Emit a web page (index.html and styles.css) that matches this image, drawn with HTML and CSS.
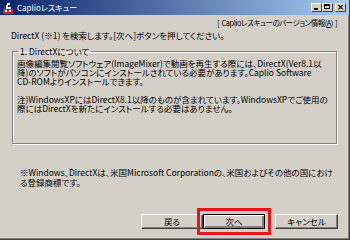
FILE: index.html
```html
<!DOCTYPE html>
<html lang="ja">
<head>
    <meta charset="UTF-8">
    <title>Caplioレスキュー</title>
    <link rel="stylesheet" href="styles.css">
</head>
<body>

<div class="window">
    <div class="titlebar">
        <svg class="app-icon" width="12" height="12" viewBox="0 0 12 12">
            <rect x="1" y="7" width="10" height="5" fill="#d0202a"/>
            <rect x="3" y="8" width="2" height="2" fill="#ffffff"/>
            <rect x="7" y="8" width="2" height="2" fill="#ffffff"/>
            <path d="M5 1h3v2H6v2h3v2H4V3h1z" fill="#ffffff"/>
            <path d="M6 0h2v1H6zM2 4h2v3H2z" fill="#1c3fb8"/>
        </svg>
        <span class="title">Caplioレスキュー</span>
        <div class="caption-buttons">
            <span class="cap-btn"><i class="min"></i></span>
            <span class="cap-btn"><i class="max"></i></span>
            <span class="cap-btn close">&#215;</span>
        </div>
    </div>

    <div class="content">
        <div class="about">[&nbsp;Caplioレスキューのバージョン情報(<u>A</u>)&nbsp;]</div>
        <p class="intro">DirectX (※1) を検索します。[次へ]ボタンを押してください。</p>

        <fieldset class="group">
            <legend>1. DirectXについて</legend>
            <p>画像編集閲覧ソフトウェア(ImageMixer)で動画を再生する際には、DirectX(Ver8.1以<br>降)のソフトがパソコンにインストールされている必要があります。Caplio Software<br>CD-ROMよりインストールできます。</p>
            <p>注)WindowsXPにはDirectX8.1以降のものが含まれています。WindowsXPでご使用の<br>際にはDirectXを新たにインストールする必要はありません。</p>
        </fieldset>

        <p class="note">※Windows、DirectXは、米国Microsoft Corporationの、米国およびその他の国におけ<br>る登録商標です。</p>

        <div class="buttons">
            <button class="btn">戻る</button>
            <button class="btn default">次へ</button>
            <button class="btn cancel">キャンセル</button>
        </div>
    </div>
</div>

</body>
</html>
```

FILE: styles.css
```css
body {
    margin: 0;
    font-family: "Noto Sans CJK JP", "DejaVu Sans", sans-serif;
    font-size: 8.5px;
    line-height: 9px;
    font-feature-settings: "palt";
    color: #000000;
}

.window {
    width: 350px;
    height: 240px;
    box-sizing: border-box;
    background-color: #d4d0c8;
    border-right: 1px solid #404040;
    border-bottom: 1px solid #404040;
    box-shadow: inset -1px -1px 0 #808080;
    display: flex;
    flex-direction: column;
}

.titlebar {
    height: 15px;
    flex-shrink: 0;
    display: flex;
    align-items: center;
    padding: 0 3px 0 2px;
    background: linear-gradient(to right, #0a246a, #a6caf0);
    color: #ffffff;
}

.app-icon {
    margin-right: 3px;
}

.title {
    font-size: 8px;
    white-space: nowrap;
}

.caption-buttons {
    margin-left: auto;
    display: flex;
    align-items: center;
}

.cap-btn {
    width: 11px;
    height: 9px;
    box-sizing: border-box;
    background-color: #d4d0c8;
    border-top: 1px solid #ffffff;
    border-left: 1px solid #ffffff;
    border-right: 1px solid #404040;
    border-bottom: 1px solid #404040;
    position: relative;
}

.cap-btn.close {
    margin-left: 2px;
    font-family: "DejaVu Sans", sans-serif;
    font-weight: bold;
    font-size: 9px;
    line-height: 7px;
    text-align: center;
    color: #000000;
}

.cap-btn .min {
    position: absolute;
    left: 2px;
    bottom: 1px;
    width: 4px;
    height: 2px;
    background-color: #000000;
}

.cap-btn .max {
    position: absolute;
    left: 1px;
    top: 0;
    width: 6px;
    height: 5px;
    box-sizing: border-box;
    border: 1px solid #000000;
    border-top-width: 2px;
}

.content {
    flex: 1;
    display: flex;
    flex-direction: column;
    padding: 0 11px 10px 10px;
}

.about {
    margin-top: 3px;
    text-align: right;
    padding-right: 1px;
    font-size: 7.5px;
    letter-spacing: -0.5px;
    word-spacing: 1px;
    white-space: nowrap;
}

.intro {
    margin: 4px 0 0 1px;
    white-space: nowrap;
}

.group {
    margin: 7px 1px 0 2px;
    padding: 3px 4px 0 4px;
    height: 92px;
    border: 1px solid #808080;
    box-shadow: inset 1px 1px 0 #ffffff, 1px 1px 0 #ffffff;
}

.group legend {
    padding: 0 2px;
    margin-left: 1px;
}

.group p {
    margin: 0 0 9px 0;
    white-space: nowrap;
}

.note {
    margin: 23px 0 0 10px;
    line-height: 10px;
    white-space: nowrap;
}

.buttons {
    margin-top: auto;
    display: flex;
    justify-content: flex-end;
}

.btn {
    width: 62px;
    height: 15px;
    padding: 0;
    font-family: inherit;
    font-size: 8.5px;
    line-height: 9px;
    font-feature-settings: "palt";
    color: #000000;
    background-color: #d4d0c8;
    border-top: 1px solid #ffffff;
    border-left: 1px solid #ffffff;
    border-right: 1px solid #404040;
    border-bottom: 1px solid #404040;
    box-shadow: inset -1px -1px 0 #808080;
}

.btn.default {
    border: 1px solid #000000;
    box-shadow: inset 1px 1px 0 #ffffff, inset -2px -2px 0 #808080;
    outline: 3px solid #e8141c;
    outline-offset: 3px;
}

.btn.cancel {
    width: 63px;
    margin-left: 10px;
}
```
